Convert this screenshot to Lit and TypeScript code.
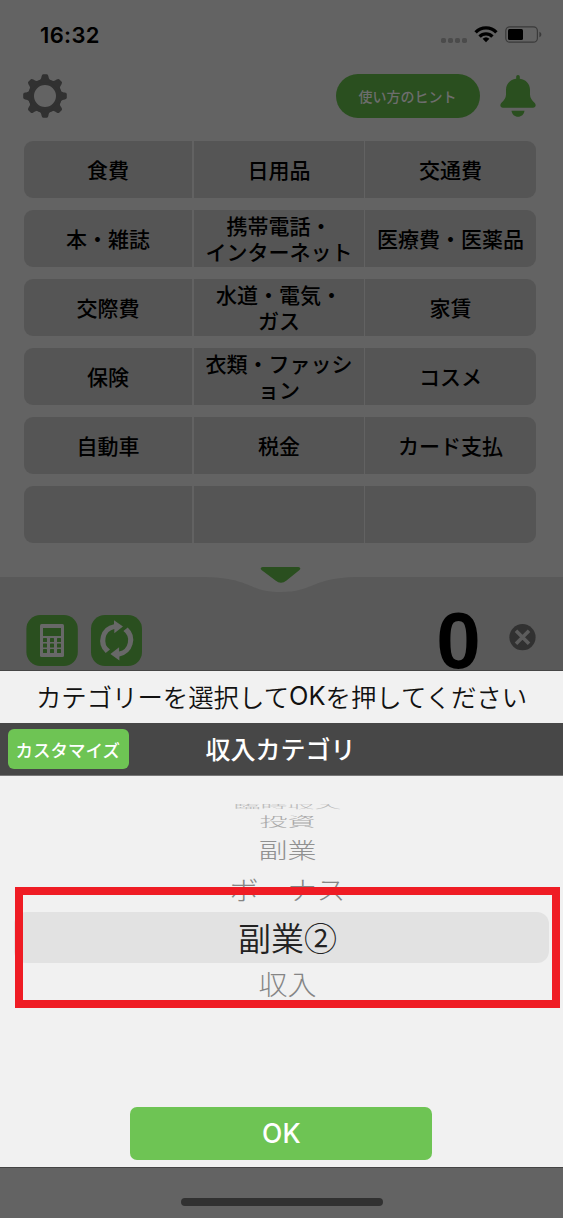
import { LitElement, html, css, svg } from "lit";
import { customElement } from "lit/decorators.js";
import { classMap } from "lit/directives/class-map.js";

const CATEGORIES: string[][][] = [
  [["食費"], ["日用品"], ["交通費"]],
  [["本・雑誌"], ["携帯電話・", "インターネット"], ["医療費・医薬品"]],
  [["交際費"], ["水道・電気・", "ガス"], ["家賃"]],
  [["保険"], ["衣類・ファッシ", "ョン"], ["コスメ"]],
  [["自動車"], ["税金"], ["カード支払"]],
  [[], [], []],
];

const tooth = (angle: number) =>
  svg`<path transform="rotate(${angle} 22 22)" d="M13.2 8.2C17 7.2 18 5.4 18.6 2.2Q19 .2 20.2 .2H23.8Q25 .2 25.4 2.2C26 5.4 27 7.2 30.8 8.2Z"/>`;

@customElement("app-status")
class AppStatus extends LitElement {
  static styles = css`
    :host { display: flex; height: 70px; box-sizing: border-box; padding: 23px 21px 0 40px; align-items: flex-start; justify-content: space-between; }
    .time { font: 600 22px/24px Inter, sans-serif; color: #000; letter-spacing: 0.35px; }
    svg { display: block; }
  `;
  render() {
    return html`
      <span class="time">16:32</span>
      <svg width="102" height="24" viewBox="440 23 102 24">
        <g fill="#4b4b4b">
          <rect x="441" y="38" width="5" height="5" rx="1.8"/><rect x="448" y="38" width="5" height="5" rx="1.8"/>
          <rect x="455" y="38" width="5" height="5" rx="1.8"/><rect x="462" y="38" width="5" height="5" rx="1.8"/>
        </g>
        <g fill="none" stroke="#000" stroke-width="3.3">
          <path d="M475.6 32.4a14.2 14.2 0 0 1 20.8 0"/><path d="M479.6 36.6a8.8 8.8 0 0 1 12.8 0"/>
        </g>
        <path d="M482.6 38.8a5 5 0 0 1 6.8 0L486 42.3Z"/>
        <rect x="505.8" y="26.8" width="31.6" height="15.4" rx="4" fill="none" stroke="#3a3a3a" stroke-width="1.2"/>
        <rect x="508" y="29" width="15" height="11" rx="1.5"/>
        <path d="M539.4 31.8c2.6 1 2.6 4.4 0 5.4Z" fill="#3a3a3a"/>
      </svg>`;
  }
}

@customElement("app-header")
class AppHeader extends LitElement {
  static styles = css`
    :host { display: flex; height: 71px; box-sizing: border-box; padding: 4px 27px 0 23px; align-items: flex-start; }
    .hint { margin: 0 20px 0 auto; width: 144px; height: 44px; box-sizing: border-box; padding: 0 1px 1px 0; border-radius: 22px; background: #2a4f1f; color: #6d6d6d;
      display: flex; align-items: center; justify-content: center; font-size: 14px; font-weight: 500; }
    .gear, .bell { display: block; }
  `;
  render() {
    return html`
      <svg class="gear" width="44" height="44" viewBox="0 0 44 44" fill="#313131">
        <path fill-rule="evenodd" d="M22 5A17 17 0 1 1 22 39A17 17 0 1 1 22 5ZM22 11A11 11 0 1 0 22 33A11 11 0 1 0 22 11Z"/>
        ${[0, 45, 90, 135, 180, 225, 270, 315].map(tooth)}
      </svg>
      <div class="hint">使い方のヒント</div>
      <svg class="bell" width="36" height="44" viewBox="0 0 36 44" fill="#2a4f1f">
        <path d="M18 1C16.800 1 16.200 1.900 16.200 3V4.800C10 5.700 6 10 6 16V20.500C6 24 4 26.300 1.500 28.800C-.7 31.200 .5 33.700 3 33.700H33C35.500 33.700 36.700 31.200 34.500 28.800C32 26.300 30 24 30 20.500V16C30 10 26 5.700 19.800 4.800V3C19.800 1.900 19.200 1 18 1Z"/>
        <path d="M11.500 36.700H24.500C24 40.500 21.300 42.700 18 42.700S12 40.500 11.500 36.700Z"/>
      </svg>`;
  }
}

@customElement("category-grid")
class CategoryGrid extends LitElement {
  static styles = css`
    :host { display: flex; flex-direction: column; gap: 12px; padding: 0 27px 0 24px; height: 426px; box-sizing: border-box; }
    .row { display: grid; grid-template-columns: 168px 2px 170px 1px 171px; height: 57px; border-radius: 9px; overflow: hidden; }
    .rule { background: #626262; }
    .cell { background: #555; display: flex; flex-direction: column; align-items: center; justify-content: center; padding-bottom: 1px;
      font-size: 21px; line-height: 26px; font-weight: 500; color: #000; white-space: nowrap; }
  `;
  render() {
    return CATEGORIES.map(
      (row) => html`<div class="row">${row.map(
        (lines, i) => html`${i ? html`<i class="rule"></i>` : ""}<div class="cell">${lines.map((l) => html`<span>${l}</span>`)}</div>`
      )}</div>`
    );
  }
}

const ARROW = "M19 34.600A11.500 11.500 0 0 1 23.300 14.100V18.300L32 11.500L23 5.200V9.200A16.700 16.700 0 0 0 14.700 38Z";

@customElement("amount-panel")
class AmountPanel extends LitElement {
  static styles = css`
    :host { display: grid; height: 104px; overflow: hidden; }
    .wave, .tools { grid-area: 1 / 1; }
    .wave { display: block; }
    .tools { display: flex; align-items: flex-start; padding: 48px 27px 0 26px; gap: 13px; }
    .tool, .clear { display: block; flex: none; }
    .amount { margin-left: auto; font: 700 80px/52px "Liberation Sans", sans-serif; color: #000; width: 45px; text-align: center; }
    .clear { margin: 9px 0 0 15px; }
  `;
  render() {
    return html`
      <svg class="wave" width="563" height="104" viewBox="0 567 563 104">
        <path fill="#595959" d="M0 577H205C252 578 248 592 281 592S310 578 357 577H563V671H0Z"/>
        <path fill="#2a4f1f" d="M262.500 567H298.500Q301.500 567.500 299.500 570L286.500 580.500Q281 585 275.500 580.500L261.500 570Q259.500 567.500 262.500 567Z"/>
        <path fill="#464646" d="M0 670H563V671H0Z"/>
      </svg>
      <div class="tools">
        <svg class="tool" width="52" height="51" viewBox="0 0 52 51">
          <rect x=".4" width="51.400" height="51" rx="14" fill="#2a4f1f"/>
          <rect x="14" y="9" width="24" height="33" rx="1.500" fill="#686868"/>
          <g fill="#2a4f1f"><rect x="17" y="13" width="18" height="8"/>
          ${[23, 28.5, 34].map((y) => [17, 24, 31].map((x) => svg`<rect x=${x} y=${y} width="4" height="4" rx=".6"/>`))}</g>
        </svg>
        <svg class="tool" width="51" height="51" viewBox="0 0 51 51">
          <rect width="51" height="51" rx="14" fill="#2a4f1f"/>
          <g fill="#686868">
            <path d=${ARROW}/>
            <path transform="rotate(180 25.700 25.300)" d=${ARROW}/>
          </g>
        </svg>
        <div class="amount">0</div>
        <svg class="clear" width="27" height="27" viewBox="0 0 27 27">
          <circle cx="13.500" cy="13.200" r="13.100" fill="#313131"/>
          <path d="M7 6.700L20 19.700M20 6.700L7 19.700" stroke="#5c5c5c" stroke-width="3.600"/>
        </svg>
      </div>`;
  }
}

const WHEEL = [
  { label: "臨時収入", cls: "w1" },
  { label: "投資", cls: "w2" },
  { label: "副業", cls: "w3" },
  { label: "ボーナス", cls: "w4" },
  { label: "副業②", cls: "selected" },
  { label: "収入", cls: "w6" },
];

@customElement("category-sheet")
class CategorySheet extends LitElement {
  static styles = css`
    :host { display: flex; flex-direction: column; height: 496px; background: #f1f1f1; position: relative; }
    .prompt { height: 52px; box-sizing: border-box; padding-bottom: 3px; display: flex; align-items: center; justify-content: center; font-size: 25.400px; font-weight: 350; color: #111; white-space: nowrap; }
    .latin { font-family: Inter, sans-serif; font-weight: 400; }
    .bar { height: 53px; background: #474747; display: grid; grid-template-columns: 129px 1fr 129px; align-items: center; border-bottom: 1px solid #777; box-sizing: border-box; }
    .custom { margin-left: 7.500px; width: 121.500px; height: 40px; box-sizing: border-box; padding: 0 1px 0 0; border-radius: 6px; background: #6ec454; color: #fff; display: flex; align-items: center; justify-content: center; font-size: 17.500px; font-weight: 500; }
    .title { color: #fff; font-size: 25px; font-weight: 500; text-align: center; line-height: 48px; height: 51px; padding-right: 2px; }
    .wheel { display: flex; flex-direction: column; align-items: stretch; padding: 26px 14px 0; height: 331px; box-sizing: border-box; }
    .item { display: flex; align-items: center; justify-content: center; font-size: 29px; font-weight: 300; color: #858585; flex: none; white-space: nowrap; padding-left: 12px; }
    .item span { display: block; line-height: 40px; margin-bottom: 2px; }
    .w1 { height: 8px; color: #bbb; font-size: 27px; } .w1 span { transform: scaleY(.17); margin: 0; }
    .w2 { height: 22px; color: #aaa; font-size: 28px; } .w2 span { transform: scaleY(.45); margin: 0; }
    .w3 { height: 34px; color: #909090; } .w3 span { transform: scaleY(.74); }
    .w4 { height: 46px; } .w4 span { transform: scaleY(.92); }
    .selected { height: 51px; background: #e2e2e2; border-radius: 12px; color: #222; font-size: 33px; font-weight: 350; }
    .w6 { height: 43px; } .w6 span { transform: scaleY(.93); margin-bottom: 3px; }
    .marker { position: absolute; left: 15px; top: 216px; width: 545px; height: 121px; box-sizing: border-box; border: 8px solid #ef1c24; }
    .ok { width: 302px; height: 52.500px; margin-left: 130.400px; border-radius: 7px; background: #6ec454; color: #fff; display: flex; align-items: center; justify-content: center; font: 500 26.500px Inter, sans-serif; }
  `;
  render() {
    return html`
      <div class="prompt">カテゴリーを選択して<span class="latin">OK</span>を押してください</div>
      <div class="bar"><div class="custom">カスタマイズ</div><div class="title">収入カテゴリ</div></div>
      <div class="wheel">
        ${WHEEL.map((w) => html`<div class=${classMap({ item: true, [w.cls]: true })}><span>${w.label}</span></div>`)}
      </div>
      <div class="ok">OK</div>
      <div class="marker"></div>`;
  }
}

@customElement("app-root")
class AppRoot extends LitElement {
  static styles = css`
    :host { display: flex; flex-direction: column; width: 563px; height: 1218px; overflow: hidden; background: #636363;
      font-family: "Noto Sans CJK JP", sans-serif; }
    .home { flex: 1; display: flex; justify-content: center; align-items: flex-start; padding-top: 30px; box-sizing: border-box; border-top: 1px solid #444; }
    .indicator { width: 202px; height: 8px; border-radius: 4px; background: #313131; }
  `;
  render() {
    return html`
      <app-status></app-status>
      <app-header></app-header>
      <category-grid></category-grid>
      <amount-panel></amount-panel>
      <category-sheet></category-sheet>
      <div class="home"><div class="indicator"></div></div>`;
  }
}
